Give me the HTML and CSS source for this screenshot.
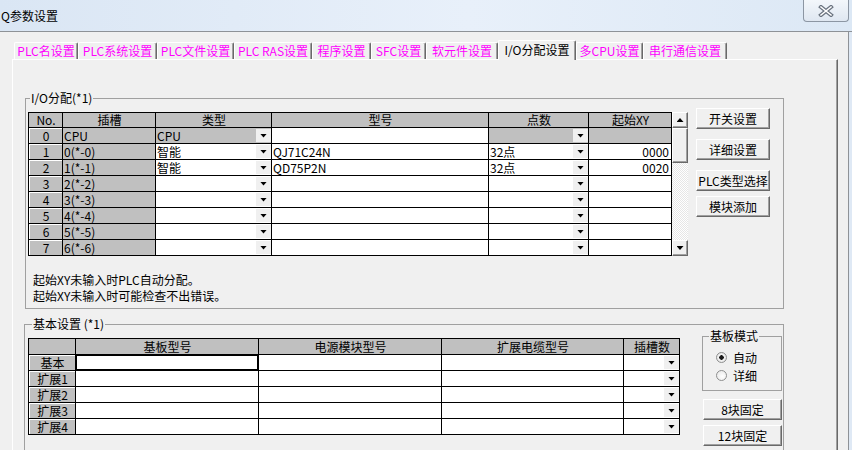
FILE: index.html
```html
<!DOCTYPE html>
<html>
<head>
  <meta charset="utf-8">
  <link rel="stylesheet" href="styles.css">
</head>
<body>
  <div class="titlebar">
    <span class="title">Q参数设置</span>
    <div class="close-btn">
      <svg width="16" height="12" viewBox="0 0 16 12">
        <path d="M3 2 L13 10 M13 2 L3 10" stroke="#6b7480" stroke-width="4" stroke-linecap="square"/>
        <path d="M3 2 L13 10 M13 2 L3 10" stroke="#ffffff" stroke-width="1.6" stroke-linecap="square"/>
      </svg>
    </div>
  </div>

  <div class="client">
    <div class="tabs">
      <div class="tab">PLC名设置</div>
      <div class="tab">PLC系统设置</div>
      <div class="tab">PLC文件设置</div>
      <div class="tab">PLC RAS设置</div>
      <div class="tab">程序设置</div>
      <div class="tab">SFC设置</div>
      <div class="tab">软元件设置</div>
      <div class="tab selected">I/O分配设置</div>
      <div class="tab">多CPU设置</div>
      <div class="tab">串行通信设置</div>
    </div>

    <div class="panel">
      <fieldset class="group io-group">
        <legend>I/O分配(*1)</legend>
        <div class="io-row">
          <div class="table-wrap">
            <div class="grid io-grid">
              <div class="cell head">No.</div>
              <div class="cell head">插槽</div>
              <div class="cell head">类型</div>
              <div class="cell head">型号</div>
              <div class="cell head">点数</div>
              <div class="cell head">起始XY</div>

              <div class="cell num">0</div>
              <div class="cell gray">CPU</div>
              <div class="cell gray">CPU<span class="dd"></span></div>
              <div class="cell"></div>
              <div class="cell gray"><span class="dd"></span></div>
              <div class="cell gray"></div>

              <div class="cell num">1</div>
              <div class="cell gray">0(*-0)</div>
              <div class="cell">智能<span class="dd"></span></div>
              <div class="cell">QJ71C24N</div>
              <div class="cell">32点<span class="dd"></span></div>
              <div class="cell right">0000</div>

              <div class="cell num">2</div>
              <div class="cell gray">1(*-1)</div>
              <div class="cell">智能<span class="dd"></span></div>
              <div class="cell">QD75P2N</div>
              <div class="cell">32点<span class="dd"></span></div>
              <div class="cell right">0020</div>

              <div class="cell num">3</div>
              <div class="cell gray">2(*-2)</div>
              <div class="cell"><span class="dd"></span></div>
              <div class="cell"></div>
              <div class="cell"><span class="dd"></span></div>
              <div class="cell"></div>

              <div class="cell num">4</div>
              <div class="cell gray">3(*-3)</div>
              <div class="cell"><span class="dd"></span></div>
              <div class="cell"></div>
              <div class="cell"><span class="dd"></span></div>
              <div class="cell"></div>

              <div class="cell num">5</div>
              <div class="cell gray">4(*-4)</div>
              <div class="cell"><span class="dd"></span></div>
              <div class="cell"></div>
              <div class="cell"><span class="dd"></span></div>
              <div class="cell"></div>

              <div class="cell num">6</div>
              <div class="cell gray">5(*-5)</div>
              <div class="cell"><span class="dd"></span></div>
              <div class="cell"></div>
              <div class="cell"><span class="dd"></span></div>
              <div class="cell"></div>

              <div class="cell num">7</div>
              <div class="cell gray">6(*-6)</div>
              <div class="cell"><span class="dd"></span></div>
              <div class="cell"></div>
              <div class="cell"><span class="dd"></span></div>
              <div class="cell"></div>
            </div>
            <div class="vscroll">
              <div class="sb-btn"><span class="arrow-up"></span></div>
              <div class="sb-thumb"></div>
              <div class="sb-track"></div>
              <div class="sb-btn"><span class="arrow-down"></span></div>
            </div>
          </div>
          <div class="side-buttons">
            <button class="btn">开关设置</button>
            <button class="btn gap-10">详细设置</button>
            <button class="btn gap-10">PLC类型选择</button>
            <button class="btn gap-5">模块添加</button>
          </div>
        </div>
        <div class="note">
          <div>起始XY未输入时PLC自动分配。</div>
          <div>起始XY未输入时可能检查不出错误。</div>
        </div>
      </fieldset>

      <fieldset class="group base-group">
        <legend>基本设置 (*1)</legend>
        <div class="base-row">
          <div class="grid base-grid">
            <div class="cell head"></div>
            <div class="cell head">基板型号</div>
            <div class="cell head">电源模块型号</div>
            <div class="cell head">扩展电缆型号</div>
            <div class="cell head">插槽数</div>

            <div class="cell num">基本</div>
            <div class="cell focus"></div>
            <div class="cell"></div>
            <div class="cell"></div>
            <div class="cell"><span class="dd"></span></div>

            <div class="cell num">扩展1</div>
            <div class="cell"></div>
            <div class="cell"></div>
            <div class="cell"></div>
            <div class="cell"><span class="dd"></span></div>

            <div class="cell num">扩展2</div>
            <div class="cell"></div>
            <div class="cell"></div>
            <div class="cell"></div>
            <div class="cell"><span class="dd"></span></div>

            <div class="cell num">扩展3</div>
            <div class="cell"></div>
            <div class="cell"></div>
            <div class="cell"></div>
            <div class="cell"><span class="dd"></span></div>

            <div class="cell num">扩展4</div>
            <div class="cell"></div>
            <div class="cell"></div>
            <div class="cell"></div>
            <div class="cell"><span class="dd"></span></div>
          </div>

          <div class="mode-col">
            <fieldset class="group mode-group">
              <legend>基板模式</legend>
              <div class="radio-row"><span class="radio checked"></span>自动</div>
              <div class="radio-row"><span class="radio"></span>详细</div>
            </fieldset>
            <button class="btn wide gap-8">8块固定</button>
            <button class="btn wide gap-5">12块固定</button>
          </div>
        </div>
      </fieldset>
    </div>
  </div>
</body>
</html>
```

FILE: styles.css
```css
body {
  margin: 0;
  width: 852px;
  height: 450px;
  overflow: hidden;
  font-family: "Noto Sans CJK SC", sans-serif;
  font-size: 12px;
  color: #000000;
  background: #dfe9f5;
}

/* window title */
.titlebar {
  height: 31px;
  display: flex;
  align-items: flex-start;
  background: linear-gradient(to right, #dae6f4 0%, #e8f0fa 55%, #dce8f5 100%);
  border-bottom: 1px solid #8e9297;
}

.title {
  margin: 8px 0 0 1px;
  line-height: 16px;
}

.close-btn {
  margin-left: auto;
  margin-right: 3px;
  width: 44px;
  height: 21px;
  border: 1px solid #8c96a3;
  border-top: none;
  border-radius: 0 0 4px 4px;
  background: linear-gradient(#f3f7fb, #dfe7f1);
  display: flex;
  align-items: center;
  justify-content: center;
}

.client {
  height: 418px;
  margin-right: 3px;
  border-right: 1px solid #8e9297;
  background: #f0f0f0;
  overflow: hidden;
}

/* tab strip */
.tabs {
  display: flex;
  align-items: flex-end;
  height: 19px;
  padding: 8px 0 0 14px;
}

.tab {
  box-sizing: border-box;
  height: 17px;
  border-top: 1px solid #ffffff;
  border-left: 1px solid #ffffff;
  border-right: 1px solid #696969;
  box-shadow: inset -1px 0 #a0a0a0;
  border-radius: 2px 2px 0 0;
  color: #ff00ff;
  text-align: center;
  line-height: 15px;
  white-space: nowrap;
}

.tab:nth-child(1) { width: 64px; }
.tab:nth-child(2) { width: 79px; }
.tab:nth-child(3) { width: 77px; }
.tab:nth-child(4) { width: 78px; }
.tab:nth-child(5) { width: 59px; }
.tab:nth-child(6) { width: 55px; }
.tab:nth-child(7) { width: 72px; }
.tab:nth-child(8) { width: 78px; }
.tab:nth-child(9) { width: 67px; }
.tab:nth-child(10) { width: 84px; }

.tab.selected {
  height: 20px;
  margin-bottom: -1px;
  position: relative;
  z-index: 1;
  background: #f0f0f0;
  color: #000000;
  line-height: 17px;
}

.panel {
  box-sizing: border-box;
  margin-left: 12px;
  width: 826px;
  height: 400px;
  padding-top: 32px;
  border-top: 1px solid #ffffff;
  border-left: 1px solid #ffffff;
  border-right: 1px solid #696969;
  box-shadow: inset -1px 0 #a0a0a0;
}

/* group boxes */
.group {
  box-sizing: border-box;
  min-width: 0;
  margin: 0;
  border: 1px solid #a0a0a0;
}

.group legend {
  padding: 0 1px;
  line-height: 12px;
}

.io-group {
  margin-left: 12px;
  width: 759px;
  padding: 4px 0 4px 2px;
}

.io-group legend {
  margin-left: 2px;
}

.io-row {
  display: flex;
  align-items: flex-start;
}

.table-wrap {
  display: flex;
  margin-top: 4px;
}

/* grid tables */
.grid {
  display: grid;
  border-top: 1px solid #000000;
  border-left: 1px solid #000000;
}

.io-grid {
  grid-template-columns: 34px 93px 116px 217px 100px 83px;
  grid-template-rows: 15px repeat(8, 16px);
}

.base-grid {
  margin-top: 8px;
  grid-template-columns: 47px 183px 183px 182px 56px;
  grid-template-rows: repeat(6, 16px);
}

.cell {
  box-sizing: border-box;
  display: flex;
  align-items: center;
  padding: 0 0 0 1px;
  border-right: 1px solid #000000;
  border-bottom: 1px solid #000000;
  background: #ffffff;
  line-height: 14px;
  white-space: nowrap;
}

.cell.head {
  justify-content: center;
  background: #c0c0c0;
}

.cell.gray {
  background: #c0c0c0;
}

.cell.num {
  justify-content: center;
  background: #c0c0c0;
  box-shadow: inset 1px 1px #ffffff;
}

.cell.right {
  justify-content: flex-end;
  padding-right: 2px;
}

.cell.focus {
  box-shadow: inset 0 0 0 1px #000000;
}

.dd {
  margin-left: auto;
  width: 15px;
  height: 13px;
  background: #f0f0f0;
  display: flex;
  align-items: center;
  justify-content: center;
}

.dd::after {
  content: "";
  width: 7px;
  height: 4px;
  background: #000000;
  clip-path: polygon(0 0, 100% 0, 50% 100%);
}

/* scrollbar */
.vscroll {
  width: 16px;
  height: 144px;
  display: flex;
  flex-direction: column;
  background: repeating-conic-gradient(#ffffff 0 25%, #e6e6e6 0 50%) 0 0 / 2px 2px;
}

.sb-btn,
.sb-thumb {
  box-sizing: border-box;
  background: #f0f0f0;
  border: 1px solid;
  border-color: #ffffff #696969 #696969 #ffffff;
  box-shadow: inset -1px -1px #a0a0a0;
}

.sb-btn {
  height: 16px;
  display: flex;
  align-items: center;
  justify-content: center;
}

.sb-thumb {
  height: 35px;
}

.sb-track {
  flex: 1;
}

.arrow-up,
.arrow-down {
  width: 7px;
  height: 4px;
  background: #000000;
}

.arrow-up {
  clip-path: polygon(50% 0, 100% 100%, 0 100%);
}

.arrow-down {
  clip-path: polygon(0 0, 100% 0, 50% 100%);
}

/* buttons */
.side-buttons {
  margin-left: 8px;
  display: flex;
  flex-direction: column;
}

.btn {
  box-sizing: border-box;
  width: 74px;
  height: 21px;
  padding: 0;
  border: 1px solid;
  border-color: #ffffff #696969 #696969 #ffffff;
  box-shadow: inset -1px -1px #a0a0a0;
  background: #f0f0f0;
  font-family: "Noto Sans CJK SC", sans-serif;
  font-size: 12px;
  line-height: 17px;
  color: #000000;
}

.btn.wide {
  width: 79px;
  margin-left: 1px;
}

.gap-10 { margin-top: 10px; }
.gap-8 { margin-top: 8px; }
.gap-5 { margin-top: 5px; }

.note {
  margin: 16px 0 0 5px;
  line-height: 16px;
}

/* basic settings */
.base-group {
  margin: 9px 0 0 11px;
  width: 760px;
  height: 200px;
  padding: 0 0 0 3px;
}

.base-group legend {
  margin-left: 4px;
}

.base-row {
  display: flex;
  align-items: flex-start;
}

.mode-col {
  margin-left: 22px;
  display: flex;
  flex-direction: column;
}

.mode-group {
  width: 80px;
  padding: 6px 0 6px 0;
}

.mode-group legend {
  margin-left: 6px;
}

.radio-row {
  display: flex;
  align-items: center;
  height: 18px;
  margin-left: 13px;
}

.radio {
  box-sizing: border-box;
  width: 11px;
  height: 11px;
  margin-right: 6px;
  border-radius: 50%;
  border: 1px solid #8e8f8f;
  background: radial-gradient(circle at 60% 60%, #ffffff 0, #e4e4e4 100%);
}

.radio.checked {
  background: radial-gradient(circle, #1a1a1a 0 2px, #f4f4f4 2.5px, #dcdcdc 100%);
}
```
